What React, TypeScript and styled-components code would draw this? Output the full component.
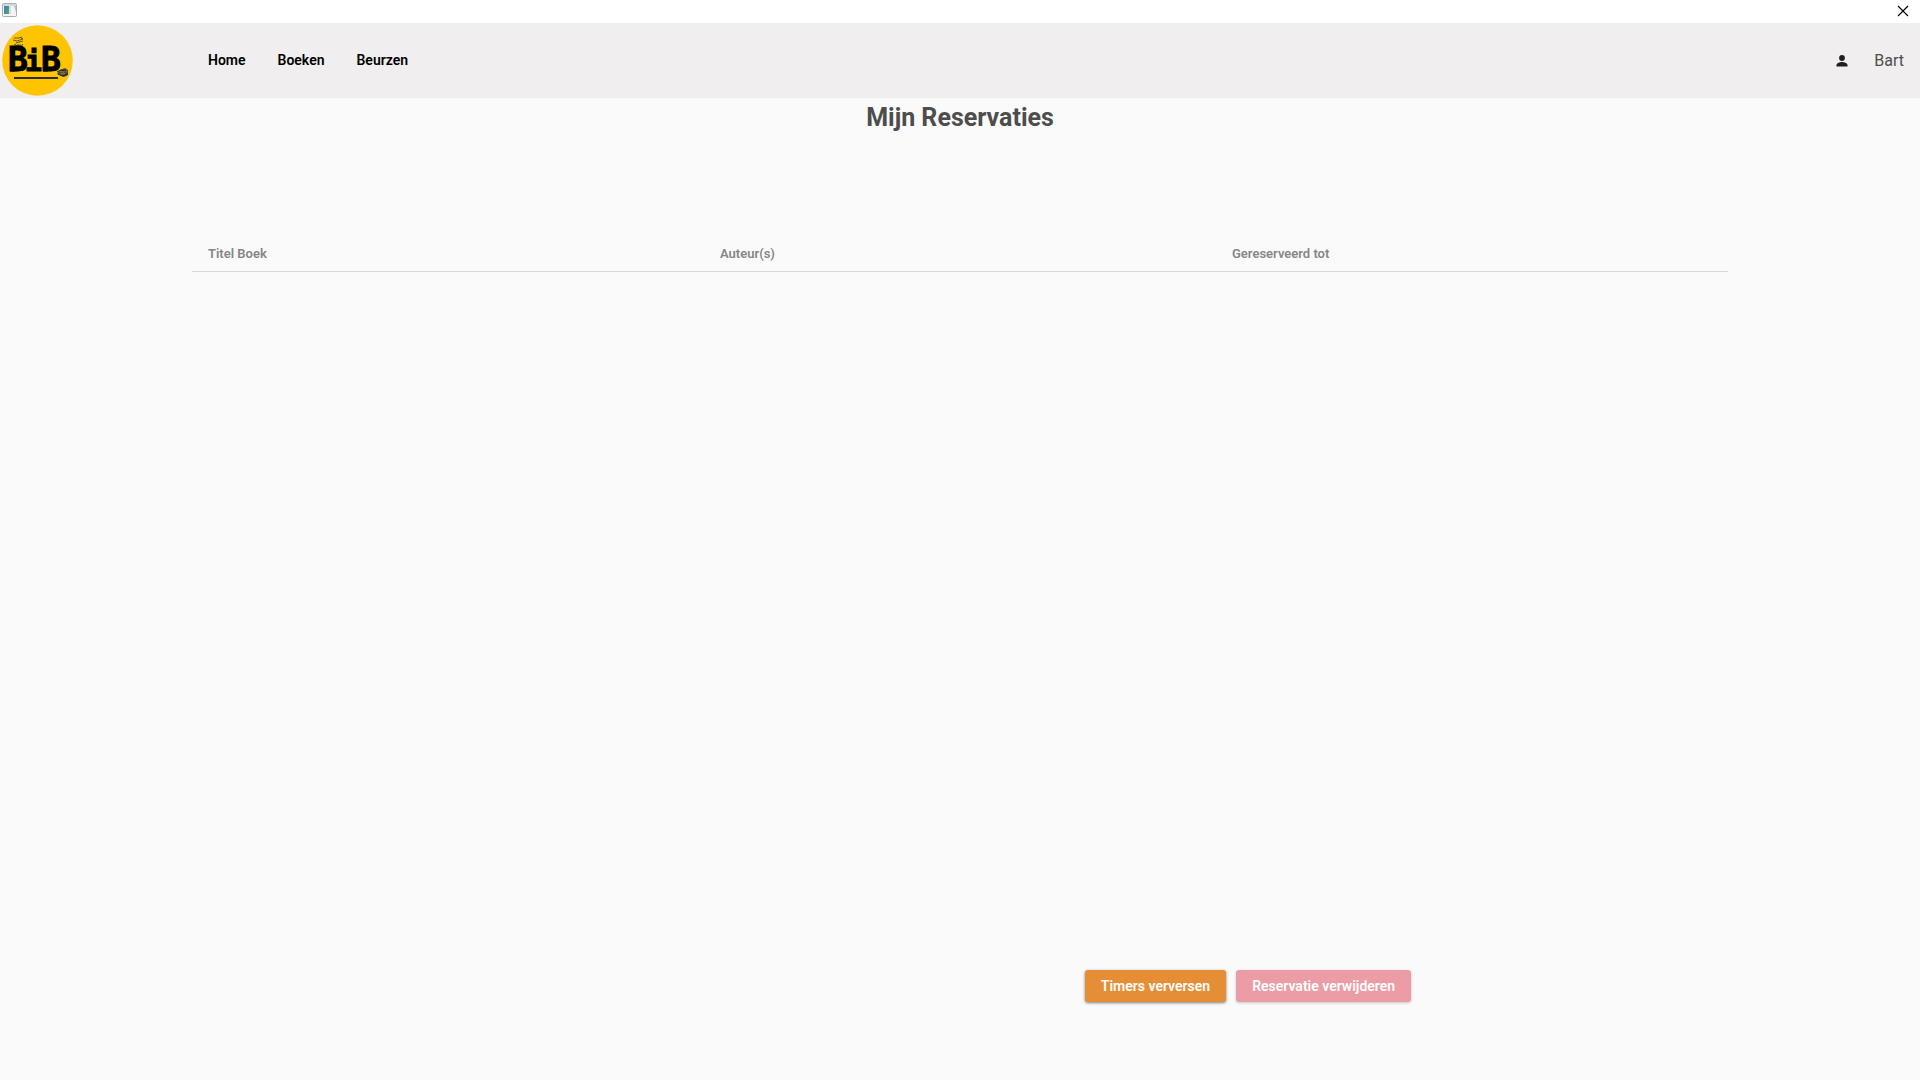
import React from "react";
import styled, { createGlobalStyle } from "styled-components";

const GlobalStyle = createGlobalStyle`
  *, *::before, *::after { box-sizing: border-box; }
  body {
    margin: 0;
    background: #fafafa;
    color: #4d4d4d;
    font-family: Roboto, "Liberation Sans", sans-serif;
  }
`;

const Window = styled.div`
  min-height: 100vh;
  display: flex;
  flex-direction: column;
`;

const TitleBar = styled.div`
  height: 23px;
  padding: 0 11px 2px 2px;
  display: flex;
  align-items: center;
  justify-content: space-between;
  background: #ffffff;
`;

const CloseButton = styled.button`
  display: flex;
  padding: 0;
  border: 0;
  background: none;
`;

const Header = styled.header`
  display: grid;
  grid-template-columns: 10% 1fr auto;
  align-items: center;
  height: 75px;
  background: #f0eeef;
`;

const LogoLink = styled.a`
  display: flex;
  padding-left: 2px;
`;

const Nav = styled.nav`
  display: flex;
  gap: 32px;
  padding-left: 16px;
  padding-bottom: 1px;
`;

const NavLink = styled.a`
  color: #000000;
  font-size: 14px;
  font-weight: 600;
  line-height: 20px;
  text-decoration: none;
`;

const User = styled.div`
  display: flex;
  align-items: center;
  gap: 24px;
  padding-right: 16px;
  font-size: 16px;
  line-height: 20px;
`;

const Main = styled.main`
  flex: 1;
  display: flex;
  flex-direction: column;
  padding-bottom: 78px;
`;

const Title = styled.h1`
  margin: 0;
  padding-top: 4px;
  font-size: 25px;
  font-weight: 700;
  line-height: 32px;
  text-align: center;
`;

const TableArea = styled.section`
  flex: 1;
  padding: 100px 10% 0;
`;

const Table = styled.table`
  width: 100%;
  table-layout: fixed;
  border-collapse: separate;
  border-spacing: 0;
`;

const HeadCell = styled.th`
  height: 38px;
  padding: 2px 16px 0;
  border-bottom: 1px solid #d9d9d9;
  color: #868686;
  font-size: 13px;
  font-weight: 600;
  line-height: 16px;
  text-align: left;
`;

const Actions = styled.div`
  display: flex;
  gap: 10px;
  margin-left: 56.5%;
`;

const ActionButton = styled.button<{ $color: string }>`
  height: 32px;
  padding: 0 16px;
  border: 0;
  border-radius: 3px;
  background: ${(p) => p.$color};
  box-shadow: 0 1px 3px rgba(0, 0, 0, 0.5);
  color: #ffffff;
  font-family: inherit;
  font-size: 14px;
  font-weight: 600;
  line-height: 20px;

  &:disabled {
    box-shadow: 0 1px 3px rgba(0, 0, 0, 0.2);
  }
`;

const WindowIcon = () => (
  <svg width="16" height="15" viewBox="0 0 16 15" aria-hidden="true">
    <defs>
      <linearGradient id="pane" x1="0" y1="0" x2="1" y2="1">
        <stop offset="0" stopColor="#3f78b5" />
        <stop offset="1" stopColor="#4fae72" />
      </linearGradient>
    </defs>
    <rect x="0.5" y="0.5" width="14" height="13" rx="1" fill="#f4f4f6" stroke="#a9adb5" />
    <rect x="1" y="1" width="13" height="2" fill="#d3d6dc" />
    <rect x="2" y="3" width="5" height="8" fill="url(#pane)" />
    <rect x="7" y="3" width="2" height="8" fill="#d9dde0" />
    <path d="M12 3h2v6z" fill="#9bcdbd" />
  </svg>
);

const CloseIcon = () => (
  <svg width="12" height="12" viewBox="0 0 12 12" aria-hidden="true">
    <path d="M1 1l10 10M11 1L1 11" stroke="#000000" strokeWidth="1.2" />
  </svg>
);

const Logo = () => (
  <svg width="71" height="71" viewBox="0 0 71 71" role="img" aria-label="BiB">
    <circle cx="35.5" cy="35.5" r="35.3" fill="#ffc400" />
    <g stroke="#5d5630" strokeWidth="1" fill="none">
      <path d="M12 13h5l3-1M11 15l4 1 6-2M14 18l7-2M19 13l2 1M12 20l2-1M20 19l1 1" />
      <path d="M13 21.500l2-1.500h4l2 1.500z" fill="#4a4a4a" />
    </g>
    <g
      fontFamily='"DejaVu Sans Mono", monospace'
      fontSize="33"
      fontWeight="700"
      fill="#000000"
      stroke="#000000"
      strokeWidth="1"
    >
      <text x="6" y="46">B</text>
      <text x="23" y="46" fontSize="28">i</text>
      <text x="39" y="46">B</text>
    </g>
    <path d="M8 22h5v4H8zM8 42h5v4.500H8zM41 22h5v4h-5zM41 42h5v4.500h-5z" fill="#000000" />
    <rect x="12" y="52" width="44" height="2" fill="#2e2a18" />
    <path d="M58 45l5-2 3 2v5l-4 2-3-1-4-2z" fill="#4b4a42" />
    <path d="M56 46l5 1 4-1M58 49l5-0.500" stroke="#a08a38" strokeWidth="0.8" fill="none" />
    <path d="M55 47l4-2 5 1M56 49l5 2 5-2" stroke="#22252d" strokeWidth="1" fill="none" />
  </svg>
);

const UserIcon = () => (
  <svg width="16" height="16" viewBox="0 0 16 16" aria-hidden="true">
    <circle cx="8" cy="5" r="2.9" fill="#1f1f1f" />
    <path d="M2.5 13.5v-1.3C2.5 10.2 5.8 9 8 9s5.500 1.200 5.500 3.200v1.300z" fill="#1f1f1f" />
  </svg>
);

const links = ["Home", "Boeken", "Beurzen"];
const columns = ["Titel Boek", "Auteur(s)", "Gereserveerd tot"];

export default function App() {
  return (
    <>
      <GlobalStyle />
      <Window>
        <TitleBar>
          <WindowIcon />
          <CloseButton type="button" aria-label="Sluiten">
            <CloseIcon />
          </CloseButton>
        </TitleBar>
        <Header>
          <LogoLink href="#home">
            <Logo />
          </LogoLink>
          <Nav>
            {links.map((label) => (
              <NavLink key={label} href={`#${label.toLowerCase()}`}>
                {label}
              </NavLink>
            ))}
          </Nav>
          <User>
            <UserIcon />
            <span>Bart</span>
          </User>
        </Header>
        <Main>
          <Title>Mijn Reservaties</Title>
          <TableArea>
            <Table>
              <thead>
                <tr>
                  {columns.map((label) => (
                    <HeadCell key={label} scope="col">
                      {label}
                    </HeadCell>
                  ))}
                </tr>
              </thead>
              <tbody />
            </Table>
          </TableArea>
          <Actions>
            <ActionButton type="button" $color="#e68e35">
              Timers verversen
            </ActionButton>
            <ActionButton type="button" $color="#eb9ca5" disabled>
              Reservatie verwijderen
            </ActionButton>
          </Actions>
        </Main>
      </Window>
    </>
  );
}
